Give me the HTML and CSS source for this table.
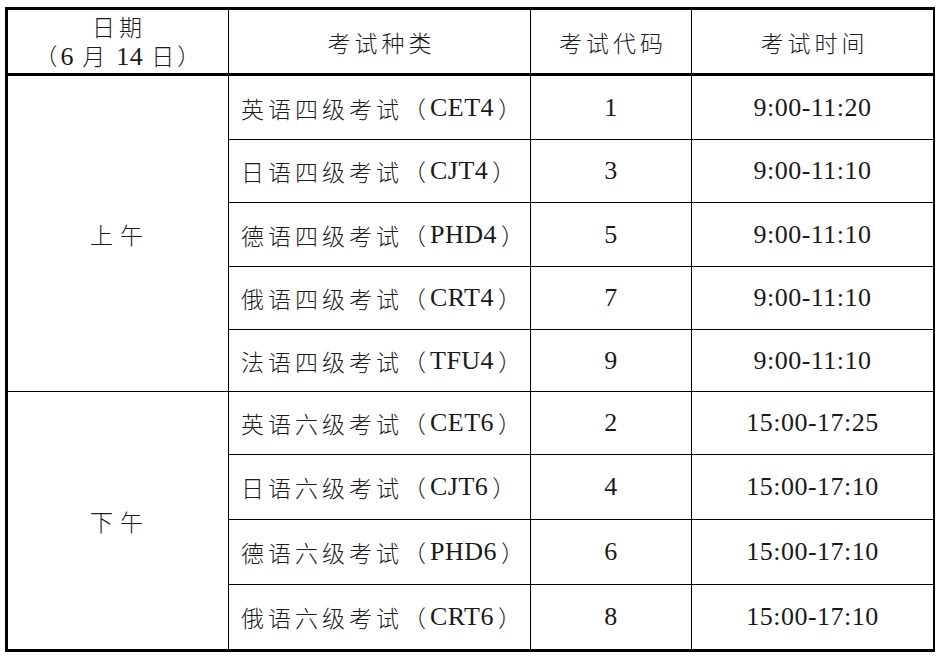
FILE: index.html
```html
<!DOCTYPE html>
<html lang="zh-CN">
<head>
<meta charset="utf-8">
<title>考试时间安排</title>
<link rel="stylesheet" href="styles.css">
</head>
<body>
<div class="sheet">
  <div class="cell head date-head">
    <div class="cjk">日期</div>
    <div class="cjk sub">（<span class="lat">6</span> 月 <span class="lat">14</span> 日）</div>
  </div>
  <div class="cell head center cjk">考试种类</div>
  <div class="cell head center cjk">考试代码</div>
  <div class="cell head center cjk">考试时间</div>

  <div class="cell period am center cjk">上午</div>
  <div class="cell name cjk">英语四级考试（<span class="lat code">CET4</span>）</div>
  <div class="cell center lat">1</div>
  <div class="cell center lat">9:00-11:20</div>

  <div class="cell name cjk">日语四级考试（<span class="lat code">CJT4</span>）</div>
  <div class="cell center lat">3</div>
  <div class="cell center lat">9:00-11:10</div>

  <div class="cell name cjk">德语四级考试（<span class="lat code">PHD4</span>）</div>
  <div class="cell center lat">5</div>
  <div class="cell center lat">9:00-11:10</div>

  <div class="cell name cjk">俄语四级考试（<span class="lat code">CRT4</span>）</div>
  <div class="cell center lat">7</div>
  <div class="cell center lat">9:00-11:10</div>

  <div class="cell name cjk">法语四级考试（<span class="lat code">TFU4</span>）</div>
  <div class="cell center lat">9</div>
  <div class="cell center lat">9:00-11:10</div>

  <div class="cell period pm center cjk">下午</div>
  <div class="cell name cjk">英语六级考试（<span class="lat code">CET6</span>）</div>
  <div class="cell center lat">2</div>
  <div class="cell center lat">15:00-17:25</div>

  <div class="cell name cjk">日语六级考试（<span class="lat code">CJT6</span>）</div>
  <div class="cell center lat">4</div>
  <div class="cell center lat">15:00-17:10</div>

  <div class="cell name cjk">德语六级考试（<span class="lat code">PHD6</span>）</div>
  <div class="cell center lat">6</div>
  <div class="cell center lat">15:00-17:10</div>

  <div class="cell name cjk">俄语六级考试（<span class="lat code">CRT6</span>）</div>
  <div class="cell center lat">8</div>
  <div class="cell center lat">15:00-17:10</div>
</div>
</body>
</html>
```
FILE: styles.css
```css
html, body {
  margin: 0;
  padding: 0;
  background: #ffffff;
}

body {
  font-family: "Liberation Serif", "Noto Sans CJK SC", serif;
  color: #111;
}

.sheet {
  margin: 7px 0 0 5px;
  width: 924px;
  display: grid;
  grid-template-columns: 220px 301px 160px 241px;
  grid-template-rows: 65px 63px 62px 63px 62px 61px 62px 64px 64px 64px;
  gap: 1px;
  background: #000;
  border: 3px solid #000;
}

.cell {
  background: #fff;
  display: flex;
  align-items: center;
  min-width: 0;
}

.head {
  margin-bottom: 2px;
}

.center {
  justify-content: center;
}

.cjk {
  font-family: "Noto Sans CJK SC", sans-serif;
  font-weight: 300;
  font-size: 23px;
  letter-spacing: 4px;
  color: #1c1c1c;
}

.center.cjk {
  padding-left: 4px;
}

.lat {
  font-family: "Liberation Serif", serif;
  font-weight: 400;
  font-size: 26px;
  letter-spacing: 0.5px;
  color: #1a1a1a;
}

.code {
  margin-right: 4px;
}

.date-head {
  flex-direction: column;
  justify-content: center;
  align-items: center;
  line-height: 29px;
  padding-left: 2px;
}

.date-head .sub {
  letter-spacing: 3px;
}

.name {
  padding-left: 12px;
  white-space: nowrap;
}

.am {
  grid-row: span 5;
}

.pm {
  grid-row: span 4;
}

.period {
  letter-spacing: 7px;
  padding-left: 7px;
}
```
